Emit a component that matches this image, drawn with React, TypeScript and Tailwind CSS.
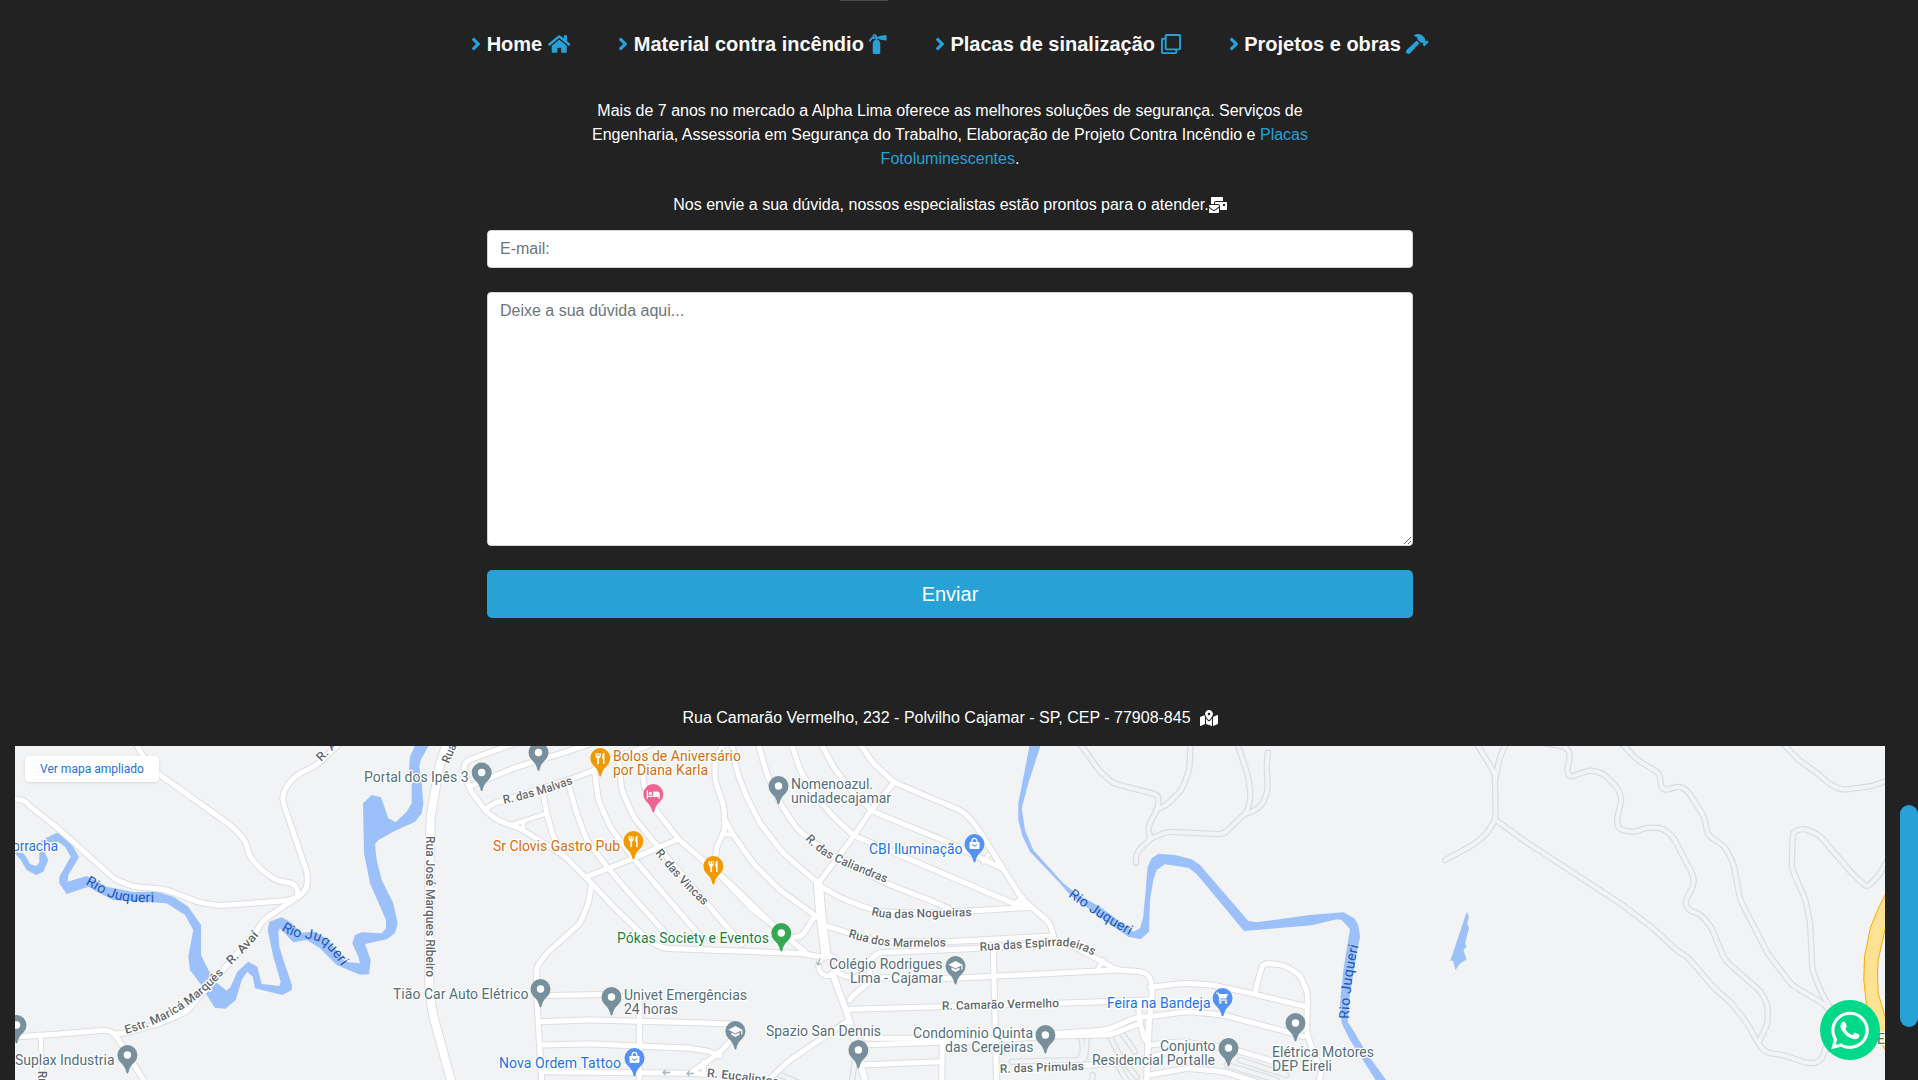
import type { ReactNode } from "react";
import {
  FaFireExtinguisher,
  FaHammer,
  FaHome,
  FaMailBulk,
  FaMapMarkedAlt,
  FaRegClone,
  FaWhatsapp,
} from "react-icons/fa";

/* ---------- Map geometry ---------- */

// Every map sector stores its points on a fine grid, relative to its own left edge.
type Sector = { x: number; scale: number };
const A: Sector = { x: 0, scale: 3 };
const B: Sector = { x: 360, scale: 3 };
const C: Sector = { x: 600, scale: 3 };
const D: Sector = { x: 820, scale: 3 };
const E: Sector = { x: 1080, scale: 3 };
const F: Sector = { x: 1380, scale: 2.9145 };

const MAP_TOP = 740;

function points(sector: Sector, raw: string) {
  return raw.split(" ").map((pair) => {
    const [x, y] = pair.split(",").map(Number);
    return [sector.x + x / sector.scale, MAP_TOP + y / 3] as const;
  });
}

function line(sector: Sector, raw: string) {
  return "M" + points(sector, raw).map(([x, y]) => `${x.toFixed(1)} ${y.toFixed(1)}`).join("L");
}

// Rounds each corner with a quadratic curve.
function curve(sector: Sector, raw: string) {
  const p = points(sector, raw);
  let d = `M${p[0][0].toFixed(1)} ${p[0][1].toFixed(1)}`;
  for (let i = 1; i < p.length - 1; i++) {
    const [ax, ay] = p[i - 1];
    const [bx, by] = p[i];
    const [cx, cy] = p[i + 1];
    const before = Math.min(0.5, 5 / Math.max(1, Math.hypot(bx - ax, by - ay)));
    const after = Math.min(0.5, 5 / Math.max(1, Math.hypot(cx - bx, cy - by)));
    d += `L${(bx + (ax - bx) * before).toFixed(1)} ${(by + (ay - by) * before).toFixed(1)}`;
    d += `Q${bx.toFixed(1)} ${by.toFixed(1)} ${(bx + (cx - bx) * after).toFixed(1)} ${(by + (cy - by) * after).toFixed(1)}`;
  }
  const last = p[p.length - 1];
  return d + `L${last[0].toFixed(1)} ${last[1].toFixed(1)}`;
}

const streets: [Sector, string, number?][] = [
  [A, "405,5 425,42 480,105 695,258 735,300 750,352 785,390 830,422 880,430 893,450 893,470"],
  [A, "1040,-10 950,75 885,108 855,145 847,180 922,400 922,440 900,470 860,482 660,497 600,488 495,448 400,440 345,418 180,270 85,195 75,183 35,174"],
  [A, "880,480 790,540 765,580 690,665 615,750 560,815 480,850 380,878 345,882"],
  [A, "35,892 200,880 320,870 345,882 437,1030"],
  [A, "122,890 128,1030", 4],
  [B, "262,5 238,80 212,230 208,400 208,600 208,750 218,820 275,1030", 8],
  [B, "470,8 320,62 310,85 330,150 375,210 410,240 480,265 610,345 695,430 770,510 870,605 910,625 1100,632 1320,640 1390,652"],
  [B, "335,137 460,85 620,35 700,8"],
  [B, "375,210 400,190 430,182 640,115 715,85 760,55 830,30 880,10"],
  [B, "550,160 560,220 580,290 610,345"],
  [B, "450,256 560,220", 4],
  [B, "490,248 490,270", 4],
  [B, "625,130 650,220 680,300 745,385 800,450 935,600"],
  [B, "703,90 715,180 750,260 820,355 1030,600"],
  [B, "775,50 785,150 820,230 885,310 1145,612"],
  [B, "848,50 850,130 880,200 955,297 1110,430 1260,575 1335,635"],
  [C, "350,400 455,510 560,590", 3],
  [B, "680,410 745,385 820,355 955,297"],
  [B, "695,430 685,490 660,550 560,640 530,680 530,760 535,850 545,1030"],
  [B, "530,767 740,763 830,775"],
  [B, "540,845 680,840 1000,848 1110,852"],
  [B, "540,915 700,912 990,925 1050,934 1080,948"],
  [B, "545,995 1000,1000 1060,1005"],
  [B, "838,780 838,1030"],
  [C, "400,895 350,945 270,1000"],
  [C, "310,965 312,1003", 4],
  [C, "375,5 345,60 345,120 372,200 375,270 350,320 345,370"],
  [C, "365,282 400,285", 4],
  [C, "375,240 400,285 460,370 540,450 650,530"],
  [C, "395,5 410,90 435,160 480,250 550,340 655,430"],
  [C, "473,5 500,100 540,190 590,265 650,315 710,355 860,430 1000,485 1045,505"],
  [C, "573,5 600,90 640,160 700,230 762,287 1240,490 1280,495"],
  [C, "660,5 700,80 760,160 820,215 1040,305 1205,385"],
  [C, "775,5 820,70 882,127 1090,215 1130,260 1265,475 1350,550 1362,595"],
  [D, "222,127 150,215 100,290 -5,430"],
  [D, "490,365 505,345", 4],
  [C, "655,430 662,520 678,645", 9],
  [C, "640,535 605,590 580,592"],
  [D, "-5,435 65,475 130,500 180,515 300,520 460,512 630,502"],
  [D, "580,495 608,470", 4],
  [D, "10,555 80,577 180,605 380,605 700,588"],
  [D, "90,780 95,770 150,725 148,660 175,638 480,625 740,608 810,645 890,690 970,695 990,710 997,750 988,850 980,1030"],
  [D, "50,697 85,712 400,715 890,690"],
  [D, "835,685 850,660", 4],
  [C, "697,700 745,830 797,1030", 6],
  [D, "90,808 370,800 720,790 990,780"],
  [D, "520,630 523,760 530,1030"],
  [D, "140,895 560,895 680,882 860,870 950,832 1000,828 1100,815 1210,825 1400,875 1450,890"],
  [D, "120,915 500,902 690,888 870,885 960,850"],
  [D, "120,975 360,965"],
  [D, "367,915 365,1030"],
  [D, "620,980 780,978 960,962 1050,935"],
  [E, "210,742 310,730 400,735 520,762 680,800"],
  [E, "525,758 545,680 555,670 610,675 660,705 683,760 680,880 710,960 725,995 715,1030"],
  [E, "175,790 180,850 195,900"],
  [E, "205,845 200,1030"],
  [E, "210,915 300,905 450,925 600,970"],
  [E, "210,1005 320,985 430,995 540,1030"],
  [C, "740,845 570,960 510,1015 500,1030"],
];

const trails: [Sector, string][] = [
  [E, "-30,-10 5,18 60,95 100,130 235,165 235,205 208,250 205,275 213,298 180,325 168,345 168,368"],
  [E, "332,5 328,90 305,150 260,195 228,210"],
  [E, "213,295 262,275 430,283 495,220 520,215 550,190 563,150 560,80 563,38"],
  [E, "470,5 505,110 512,170 505,205 495,220"],
  [F, "275,0 335,100 337,240 305,288 265,318 190,360"],
  [F, "370,5 348,55 340,100 335,120"],
  [F, "337,240 420,302 700,490 790,560 870,635 895,650 975,745 1025,790 1070,850 1105,915 1125,938 1175,945 1240,968 1270,970 1290,955 1300,920 1310,860"],
  [F, "480,10 540,20 555,40 545,95 553,112 610,90 650,100 690,140 705,175 690,240 695,268 740,277 780,262 825,265 855,292 915,410 913,440 888,485 900,512 930,520 965,560 1005,660 1110,755 1130,795 1130,850 1105,905"],
  [F, "695,0 750,60 815,100 820,145 835,150 870,138 895,150 945,230 955,285 1005,320 1030,370 1050,480 1130,640 1200,735 1290,790 1310,810"],
  [F, "1165,0 1220,60 1275,100 1310,132 1348,150 1435,138 1495,115"],
  [F, "1485,350 1455,405 1420,442 1380,405 1280,285 1235,265 1203,275 1200,385 1240,480 1253,545 1260,690 1285,755 1310,800"],
  [D, "800,900 795,960 575,965"],
  [D, "870,890 900,950 950,1010"],
  [D, "905,880 925,905 945,935"],
  [D, "890,970 925,1030"],
  [D, "815,1030 818,1005"],
  [E, "480,960 620,1005"],
  [E, "440,975 590,1020"],
  [E, "5,900 10,940 -5,960"],
  [C, "540,1005 600,1030"],
  [C, "765,960 755,1030"],
];

const rivers: [Sector, string][] = [
  [A, "30,335 70,340 78,350 90,372 108,378 118,368 118,340 125,300 170,278 190,285 208,300 237,352 205,405 203,425 260,408 320,440 400,456 470,455 520,470 565,500 603,555 603,645 640,720 680,752 692,740 712,695 745,665 772,680 785,732 838,738 842,725 820,650 803,570 808,545 845,532 870,545 905,578 945,575 985,600 1035,665 1080,670 1075,650 1057,610 1065,585 1085,577 1145,580 1158,565 1158,540 1110,430 1092,340 1089,190 1115,165 1143,172 1165,235 1187,247 1220,215 1235,190 1235,120 1227,90 1230,50 1248,10 1290,10 1262,60 1258,80 1265,130 1270,190 1265,220 1245,245 1180,275 1135,300 1125,312 1130,360 1145,420 1180,490 1193,550 1185,580 1160,598 1095,612 1112,660 1107,703 1080,704 1010,675 960,625 920,600 880,607 840,565 835,575 838,620 860,690 876,735 875,750 847,765 765,745 758,710 742,695 725,720 707,780 676,806 645,804 620,765 600,730 570,690 565,650 580,570 555,525 500,490 430,485 340,480 290,455 265,440 200,462 178,430 178,410 212,350 195,320 175,305 140,310 135,340 145,360 130,395 108,405 80,390 62,360 30,320"],
  [E, "-150,10 -185,190 -185,240 -172,290 -150,335 -60,430 -30,465 80,545 145,590 182,598 207,575 210,480 220,420 230,390 255,373 325,383 350,402 492,573 695,556 770,538 785,540 810,568 790,690 780,790 785,850 810,900 890,1025 922,1025 860,940 825,880 803,845 810,760 830,640 840,590 835,555 823,535 790,517 690,525 530,547 505,543 360,375 335,358 285,345 235,341 215,355 203,380 190,530 180,565 160,575 60,500 -10,462 -50,430 -140,330 -165,270 -175,205 -155,130 -116,10"],
  [F, "253,515 259,530 254,550 259,565 248,610 252,620 243,630 252,658 232,672 220,690 213,662 205,662"],
];

/* ---------- Map labels ---------- */

const GREY = "#546e7a";
const BLUE = "#1a73e8";
const ORANGE = "#d56e0c";

// [text, x, baseline, width, colour]
const places: [string, number, number, number, string][] = [
  ["Portal dos Ipês 3", 364, 782, 104.5, GREY],
  ["Bolos de Aniversário", 613, 761, 128, ORANGE],
  ["por Diana Karla", 613, 775, 95, ORANGE],
  ["Sr Clovis Gastro Pub", 493, 851, 127, ORANGE],
  ["Nomenoazul.", 791, 789, 82, GREY],
  ["unidadecajamar", 791, 803, 100, GREY],
  ["CBI Iluminação", 869, 854, 93.5, BLUE],
  ["Pókas Society e Eventos", 617, 943, 152, "#188038"],
  ["Tião Car Auto Elétrico", 393, 999, 135.5, GREY],
  ["Univet Emergências", 624, 1000, 123, GREY],
  ["24 horas", 624, 1014, 54, GREY],
  ["Nova Ordem Tattoo", 499, 1068, 122, BLUE],
  ["Colégio Rodrigues", 829, 969, 113.5, GREY],
  ["Lima - Cajamar", 850, 983, 93, GREY],
  ["Spazio San Dennis", 766, 1036, 115, GREY],
  ["Condominio Quinta", 913, 1038, 120, GREY],
  ["das Cerejeiras", 945, 1052, 88.5, GREY],
  ["Feira na Bandeja", 1107, 1008, 103.5, BLUE],
  ["Conjunto", 1160, 1051, 55.5, GREY],
  ["Residencial Portalle", 1092, 1065, 123, GREY],
  ["Elétrica Motores", 1272, 1057, 102, GREY],
  ["DEP Eireli", 1272, 1071, 60, GREY],
  ["Suplax Industria", 15, 1065, 99.5, GREY],
  ["orracha", 12, 851, 46, BLUE],
  ["En", 1877, 1044, 17, GREY],
];

// [text, baseline path, width]
const streetNames: [string, string, number][] = [
  ["R. Avaí", "M231 965 Q245 952 260 934", 41],
  ["Estr. Maricá Marquês", "M126 1034 C160 1024 188 1012 224 973", 117],
  ["R. A", "M321 762 L345 738", 24],
  ["Rua", "M449 764 L463 730", 20],
  ["Rua José Marques Ribeiro", "M426 836 L426 980", 141],
  ["R. das Malvas", "M504 804 Q540 796 575 783", 72],
  ["R. das Vincas", "M655 853 Q676 880 706 908", 72],
  ["R. das Caliandras", "M805 839 C822 860 848 867 888 884", 93],
  ["Rua das Nogueiras", "M871 915 Q885 919 902 918 L973 916", 101],
  ["Rua dos Marmelos", "M848 937 Q875 946 900 947 L969 946", 99],
  ["Rua das Espirradeiras", "M980 951 L1055 946 Q1075 945 1094 956", 115],
  ["R. Camarão Vermelho", "M942 1010 L1061 1007", 117],
  ["R. das Primulas", "M1000 1073 L1085 1070", 84],
  ["R. Eucaliptos", "M707 1077 Q735 1079 790 1088", 72],
  ["Rua", "M38 1071 L38 1095", 20],
];

const riverNames: [string, string, number][] = [
  ["Rio Juqueri", "M85 884 C105 894 108 904 160 902", 73],
  ["Rio Juqueri", "M281 930 C300 943 313 934 326 947 Q334 955 343 968", 74],
  ["Rio Juqueri", "M1068 896 Q1100 920 1133 937", 73],
  ["Rio Juqueri", "M1349 1019 Q1350 980 1359 944", 74],
  ["o", "M418 742 L430 755", 8],
];

/* ---------- Map pins ---------- */

type PinKind = "dot" | "food" | "bed" | "bag" | "cart" | "school";

const pins: [PinKind, number, number, string][] = [
  ["dot", 481.7, 772.5, "#78909c"],
  ["dot", 538.5, 752.5, "#78909c"],
  ["food", 600.3, 758, "#f29900"],
  ["bed", 653.3, 794, "#f06292"],
  ["food", 633.4, 841, "#f29900"],
  ["food", 713.4, 866, "#f29900"],
  ["dot", 778.5, 786, "#78909c"],
  ["bag", 974.5, 844, "#5491f5"],
  ["dot", 781.3, 933, "#34a853"],
  ["dot", 540.5, 989, "#78909c"],
  ["dot", 611.5, 997, "#78909c"],
  ["school", 735.4, 1031, "#78909c"],
  ["bag", 634.5, 1058, "#5491f5"],
  ["school", 955.5, 966, "#78909c"],
  ["dot", 858.4, 1050, "#78909c"],
  ["dot", 1045.4, 1035, "#78909c"],
  ["cart", 1222.6, 998, "#5491f5"],
  ["dot", 1295.5, 1023, "#78909c"],
  ["dot", 1228.5, 1048, "#78909c"],
  ["dot", 127.4, 1055, "#78909c"],
  ["dot", 16.5, 1025, "#78909c"],
];

const glyphs: Record<PinKind, ReactNode> = {
  dot: <circle r="3.7" fill="#fff" />,
  food: (
    <g fill="#fff">
      <path d="M-4.8-5h1.2v3h.8v-3h1.2v3h.8v-3H.4v3.6Q.2 0-1.3.4V6h-1.8V.4Q-4.7 0-4.8-1.4Z" />
      <path d="M2-2.4Q2-5 4.2-5.4V6H2.7V1H2Z" />
    </g>
  ),
  bed: (
    <g fill="#fff">
      <path d="M-6.6-3.6h1.3v5.3h5.2v-4.3h4.2q2.3 0 2.3 2.3v5.1H5.1V3H-5.3v1.8h-1.3Z" />
      <circle cx="-3" cy="-.6" r="1.7" />
    </g>
  ),
  bag: (
    <g>
      <path d="M-5-2H5V4Q5 5 4 5H-4Q-5 5-5 4Z" fill="#fff" />
      <path d="M-2.4-2V-3.2a2.4 2.4 0 0 1 4.8 0V-2" fill="none" stroke="#fff" strokeWidth="1.3" />
      <path d="M-2.3.5Q0 3.6 2.3.5" fill="none" stroke="#5491f5" strokeWidth="1.2" />
    </g>
  ),
  cart: (
    <g fill="#fff">
      <path d="M-6.3-5.4h2.3l.6 1.3h8.9L3.4.6H-1.9l-.5 1h6.9v1.2h-8.6l1-2.3-2-4.7h-1.2Z" />
      <circle cx="-2.2" cy="4.4" r="1.2" />
      <circle cx="3.4" cy="4.4" r="1.2" />
    </g>
  ),
  school: (
    <g fill="#fff">
      <path d="M-7-1.2 0-5 7-1.2 0 2.6Z" />
      <path d="M-4 1.4 0 3.6 4 1.4V3.8L0 6-4 3.8ZM5.8-1h1.2v4.6H5.8Z" />
    </g>
  ),
};

function Pin({ kind, x, y, color }: { kind: PinKind; x: number; y: number; color: string }) {
  return (
    <g transform={`translate(${x} ${y})`}>
      <path
        d="M0 18.4C-.9 18.4-1 17.4-1.4 15.9-2.7 11-5 9.4-7.3 6.9A10 10 0 1 1 7.3 6.9C5 9.4 2.7 11 1.4 15.9 1 17.4.9 18.4 0 18.4Z"
        fill={color}
      />
      {glyphs[kind]}
    </g>
  );
}

function MapDrawing() {
  return (
    <svg className="block h-full w-full" viewBox="15 746 1870 334" fontFamily="Roboto, sans-serif">
      <rect x="15" y="746" width="1870" height="334" fill="#f1f3f4" />
      <g fill="none" strokeLinecap="round" strokeLinejoin="round">
        {trails.map(([s, raw], i) => (
          <path key={i} d={curve(s, raw)} stroke="#dadce0" strokeWidth="6.4" />
        ))}
        {trails.map(([s, raw], i) => (
          <path key={i} d={curve(s, raw)} stroke="#f1f3f4" strokeWidth="4" />
        ))}
      </g>
      {rivers.map(([s, raw], i) => (
        <path key={i} d={line(s, raw) + "Z"} fill="#9cc0f9" />
      ))}
      <g fill="none" strokeLinecap="round" strokeLinejoin="round">
        {streets.map(([s, raw, w = 5], i) => (
          <path key={i} d={curve(s, raw)} stroke="#dcdee3" strokeWidth={w + 2} />
        ))}
        <circle cx="828.5" cy="966" r="10" stroke="#dcdee3" strokeWidth="6.5" />
        {streets.map(([s, raw, w = 5], i) => (
          <path key={i} d={curve(s, raw)} stroke="#fff" strokeWidth={w} />
        ))}
        <circle cx="828.5" cy="966" r="10" stroke="#fff" strokeWidth="4.5" />
      </g>
      <path
        d={line(F, "1485,440 1472,465 1455,500 1430,560 1412,650 1410,720 1418,795 1430,850 1455,900 1485,950 1485,870 1472,830 1452,760 1450,700 1452,660 1472,568 1485,530") + "Z"}
        fill="#fde293"
        stroke="#f9ab00"
        strokeWidth="1"
      />
      <g stroke="#a9b7c1" strokeWidth="1.3" fill="none">
        <path d="M670 1072.5h-7m2.5-2.5-2.5 2.5 2.5 2.5M694 1073.5h-7m2.5-2.5-2.5 2.5 2.5 2.5M820 958l-2 7m-1.5-3 1.5 3 3-1.5" />
      </g>
      <g fontSize="12" fontWeight="500" fill="#62676c" stroke="#fff" strokeWidth="2.5" strokeLinejoin="round" paintOrder="stroke">
        {streetNames.map(([text, d, width], i) => (
          <g key={i}>
            <path id={`street-${i}`} d={d} fill="none" stroke="none" />
            <text textLength={width} lengthAdjust="spacingAndGlyphs">
              <textPath href={`#street-${i}`} textLength={width} lengthAdjust="spacingAndGlyphs">{text}</textPath>
            </text>
          </g>
        ))}
      </g>
      <g fontSize="14" fill="#1957b9">
        {riverNames.map(([text, d, width], i) => (
          <g key={i}>
            <path id={`river-${i}`} d={d} fill="none" />
            <text>
              <textPath href={`#river-${i}`} textLength={width}>{text}</textPath>
            </text>
          </g>
        ))}
      </g>
      {pins.map(([kind, x, y, color], i) => (
        <Pin key={i} kind={kind} x={x} y={y} color={color} />
      ))}
      <g fontSize="14" stroke="#fff" strokeWidth="2.5" strokeLinejoin="round" paintOrder="stroke">
        {places.map(([text, x, y, width, color], i) => (
          <text key={i} x={x} y={y} textLength={width} fill={color}>
            {text}
          </text>
        ))}
      </g>
    </svg>
  );
}

/* ---------- Page ---------- */

function AngleRight() {
  return (
    <svg viewBox="0 0 256 512" className="h-5 w-2.5 shrink-0 fill-[#28a1d6]">
      <path d="M224.3 273l-136 136c-9.4 9.4-24.6 9.4-33.9 0l-22.6-22.6c-9.4-9.4-9.4-24.6 0-33.9l96.4-96.4-96.4-96.4c-9.4-9.4-9.4-24.6 0-33.9L54.3 103c9.4-9.4 24.6-9.4 33.9 0l136 136c9.5 9.4 9.5 24.6.1 34z" />
    </svg>
  );
}

const links = [
  { label: "Home", icon: <FaHome className="h-5 w-[22.5px]" /> },
  { label: "Material contra incêndio", icon: <FaFireExtinguisher className="h-5 w-[17.5px]" /> },
  { label: "Placas de sinalização", icon: <FaRegClone className="h-5 w-5" /> },
  { label: "Projetos e obras", icon: <FaHammer className="h-5 w-[22.5px]" /> },
];

export default function App() {
  return (
    <div className="flex h-[1080px] w-full overflow-hidden bg-[#222222] font-['Liberation_Sans',Arial,sans-serif] text-base text-white">
      <main className="flex w-[1900px] shrink-0 flex-col items-center">
        <div className="ml-[840px] h-px w-12 self-start bg-[#494949]" />

        <nav className="mt-[27px] flex h-8 items-center gap-12 text-xl font-bold text-[#f8f9fa]">
          {links.map(({ label, icon }) => (
            <a key={label} href="#" className="flex items-center gap-[5.56px] whitespace-nowrap">
              <AngleRight />
              {label}
              <span className="text-[#28a1d6]">{icon}</span>
            </a>
          ))}
        </nav>

        <p className="mt-[39px] text-center leading-6">
          Mais de 7 anos no mercado a Alpha Lima oferece as melhores soluções de segurança. Serviços de
          <br />
          Engenharia, Assessoria em Segurança do Trabalho, Elaboração de Projeto Contra Incêndio e{" "}
          <a href="#" className="text-[#28a1d6]">
            Placas
            <br />
            Fotoluminescentes
          </a>
          .
        </p>

        <form className="mt-[22px] flex w-[926px] flex-col">
          <label className="flex h-6 items-center justify-center">
            Nos envie a sua dúvida, nossos especialistas estão prontos para o atender.
            <FaMailBulk className="h-4 w-[18px]" />
          </label>
          <input
            type="email"
            placeholder="E-mail:"
            className="mt-[13px] h-[38px] rounded border border-[#ced4da] bg-white px-3 text-base text-[#495057] placeholder:text-[#6c757d]"
          />
          <textarea
            placeholder="Deixe a sua dúvida aqui..."
            className="mt-6 h-[254px] resize rounded border border-[#ced4da] bg-white px-3 py-1.5 text-base text-[#495057] placeholder:text-[#6c757d]"
          />
          <button type="button" className="mt-6 h-12 rounded-[5px] bg-[#28a1d6] text-xl">
            Enviar
          </button>
        </form>

        <p className="mt-[88px] flex h-6 items-center gap-[9px]">
          Rua Camarão Vermelho, 232 - Polvilho Cajamar - SP, CEP - 77908-845
          <FaMapMarkedAlt className="h-4 w-[18px]" />
        </p>

        <section className="relative mt-4 h-[334px] w-[1870px] overflow-hidden">
          <MapDrawing />
          <a
            href="#"
            className="absolute left-2.5 top-2.5 flex h-[26px] w-[134px] items-center justify-center rounded-sm bg-white font-[Roboto] text-xs text-[#1a73e8] shadow"
          >
            Ver mapa ampliado
          </a>
        </section>
      </main>

      <div className="mt-[805px] h-[222px] w-[18px] rounded-[10px] bg-[#28a1d6]" />

      <a
        href="#"
        aria-label="WhatsApp"
        className="absolute left-[1820px] top-[1000px] flex h-[60px] w-[60px] items-center justify-center rounded-full bg-[#00d987]"
      >
        <FaWhatsapp className="h-[43px] w-[38px]" />
      </a>
    </div>
  );
}
